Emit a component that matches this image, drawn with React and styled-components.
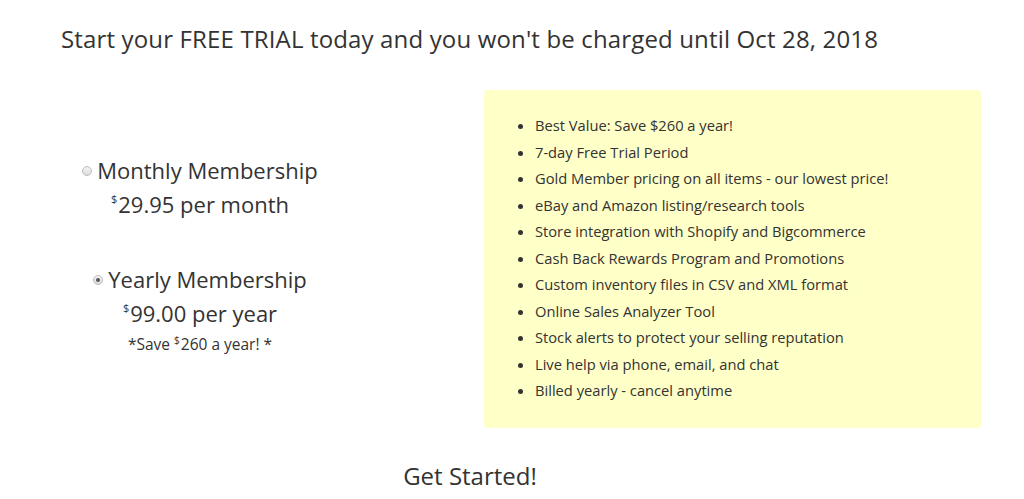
import styled, { createGlobalStyle } from "styled-components"

const features = [
	"Best Value: Save $260 a year!",
	"7-day Free Trial Period",
	"Gold Member pricing on all items - our lowest price!",
	"eBay and Amazon listing/research tools",
	"Store integration with Shopify and Bigcommerce",
	"Cash Back Rewards Program and Promotions",
	"Custom inventory files in CSV and XML format",
	"Online Sales Analyzer Tool",
	"Stock alerts to protect your selling reputation",
	"Live help via phone, email, and chat",
	"Billed yearly - cancel anytime",
]

const GlobalStyle = createGlobalStyle`
	body {
		margin: 0;
		background: #fff;
		font-family: "Open Sans", "Liberation Sans", sans-serif;
		color: #333;
	}
`

function Plan({ title, price, unit, note, checked }) {
	return (
		<StyledPlan>
			<StyledPlanTitle>
				<StyledRadio $checked={checked} />
				{title}
			</StyledPlanTitle>
			<StyledPrice>
				<sup>$</sup>
				{price} {unit}
			</StyledPrice>
			{note && (
				<StyledNote>
					*Save <sup>$</sup>260 a year! *
				</StyledNote>
			)}
		</StyledPlan>
	)
}

function App() {
	return (
		<StyledPage>
			<GlobalStyle />
			<StyledHeadline>
				Start your FREE TRIAL today and you won't be charged until Oct 28, 2018
			</StyledHeadline>
			<StyledRow>
				<StyledPlans>
					<Plan title="Monthly Membership" price="29.95" unit="per month" />
					<Plan
						title="Yearly Membership"
						price="99.00"
						unit="per year"
						note
						checked
					/>
				</StyledPlans>
				<StyledFeatures>
					<ul>
						{features.map((feature, index) => (
							<li key={index}>{feature}</li>
						))}
					</ul>
				</StyledFeatures>
			</StyledRow>
			<StyledFooter>Get Started!</StyledFooter>
		</StyledPage>
	)
}

const StyledPage = styled.div`
	width: 1024px;
	height: 499px;
	overflow: hidden;
	padding-top: 22px;
	box-sizing: border-box;
`

const StyledHeadline = styled.h1`
	margin: 0 0 0 61px;
	font-size: 24px;
	font-weight: 400;
	line-height: 34px;
	letter-spacing: 0.15px;
	color: #333;
`

const StyledRow = styled.div`
	display: grid;
	grid-template-columns: 400px 497px;
	column-gap: 84px;
	align-items: center;
	margin-top: 34px;
`

const StyledPlans = styled.div`
	display: flex;
	flex-direction: column;
	align-items: center;
	gap: 36px;
	padding-bottom: 11px;
`

const StyledPlan = styled.div`
	display: flex;
	flex-direction: column;
	align-items: center;

	sup {
		position: relative;
		top: -0.85em;
		font-size: 0.5em;
		vertical-align: baseline;
		margin-right: 1px;
	}
`

const StyledPlanTitle = styled.label`
	display: flex;
	align-items: center;
	font-size: 22px;
	line-height: 32px;
	color: #333;
`

const StyledRadio = styled.span`
	position: relative;
	width: 10px;
	height: 10px;
	margin: 2px 5px 0 0;
	border-radius: 50%;
	border: 1px solid #bdbdbd;
	background: linear-gradient(#f4f4f4, #dcdcdc);
	box-sizing: border-box;

	&::after {
		content: "";
		display: ${(props) => (props.$checked ? "block" : "none")};
		position: absolute;
		top: 2px;
		left: 2px;
		width: 4px;
		height: 4px;
		border-radius: 50%;
		background: #555;
	}
`

const StyledPrice = styled.div`
	font-size: 22px;
	line-height: 36px;
	color: #333;
`

const StyledNote = styled.div`
	font-size: 15.5px;
	line-height: 16px;
	color: #333;

	sup {
		font-size: 0.65em;
		top: -0.5em;
	}
`

const StyledFeatures = styled.div`
	background: #ffffc8;
	border-radius: 4px;
	height: 338px;
	box-sizing: border-box;
	padding: 22px 0 0;

	ul {
		margin: 0;
		padding-left: 51px;
	}

	li {
		font-size: 14.7px;
		line-height: 26.5px;
		color: #333;
	}
`

const StyledFooter = styled.div`
	width: 940px;
	margin-top: 33px;
	text-align: center;
	font-size: 24px;
	line-height: 30px;
	color: #333;
`

export default App
